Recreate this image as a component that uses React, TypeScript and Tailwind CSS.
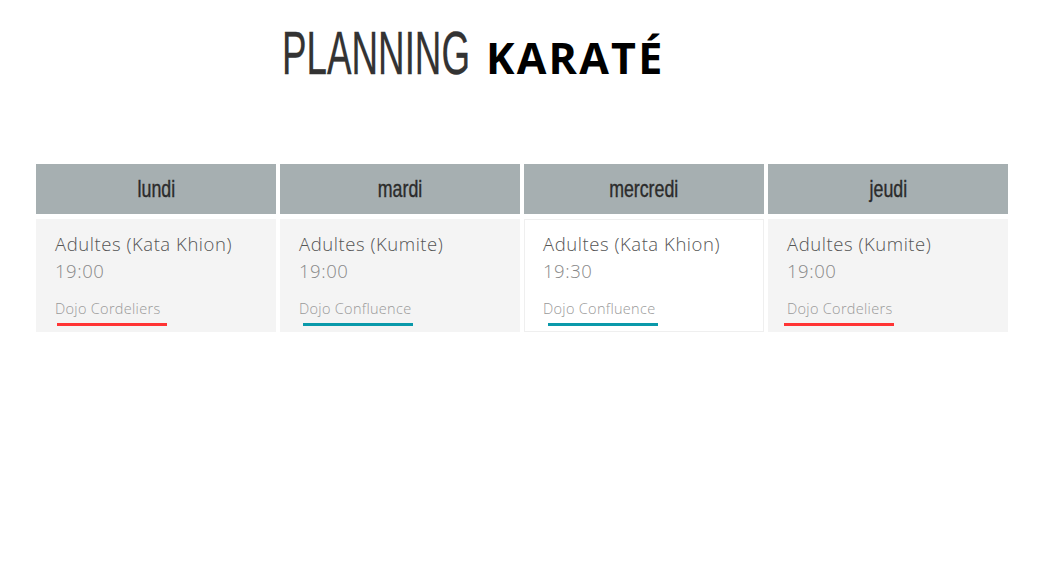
import React from "react";

const days = [
  { day: "lundi", title: "Adultes (Kata Khion)", time: "19:00", place: "Dojo Cordeliers", color: "bg-[#ff3434]", off: "ml-[2px]", white: false },
  { day: "mardi", title: "Adultes (Kumite)", time: "19:00", place: "Dojo Confluence", color: "bg-[#0a99aa]", off: "ml-[4px]", white: false },
  { day: "mercredi", title: "Adultes (Kata Khion)", time: "19:30", place: "Dojo Confluence", color: "bg-[#0a99aa]", off: "ml-[5px]", white: true },
  { day: "jeudi", title: "Adultes (Kumite)", time: "19:00", place: "Dojo Cordeliers", color: "bg-[#ff3434]", off: "ml-[-3px]", white: false },
];

export default function App() {
  return (
    <div className="w-[1058px] h-[570px] bg-white overflow-hidden">
      <div className="pl-[282px] pt-[23px] h-[164px] flex items-start">
        <h1 className="flex items-baseline leading-none">
          <span className="inline-block w-[184px]">
            <span
              className="inline-block origin-left scale-x-[0.603] text-[61px] text-[#333] font-normal whitespace-nowrap [-webkit-text-stroke:0.3px_#333]"
              style={{ fontFamily: '"Liberation Sans", sans-serif' }}
            >
              PLANNING
            </span>
          </span>
          <span
            className="ml-[20px] text-[43px] font-bold text-black tracking-[2.2px]"
            style={{ fontFamily: '"Open Sans", sans-serif' }}
          >
            KARATÉ
          </span>
        </h1>
      </div>
      <div className="ml-[36px] w-[972px] grid grid-cols-4 gap-x-[4px]">
        {days.map((d) => (
          <div key={d.day} className="flex flex-col gap-[5px]">
            <div className="h-[50px] bg-[#a6afb1] flex items-center justify-center">
              <span
                className="inline-block scale-x-[0.74] text-[24px] text-[#2b2b2b] leading-none [-webkit-text-stroke:0.4px_#2b2b2b]"
                style={{ fontFamily: '"Liberation Sans", sans-serif' }}
              >
                {d.day}
              </span>
            </div>
            <div
              className={
                "h-[113px] " +
                (d.white ? "bg-white border border-[#efefef] pl-[18px] pt-[10px]" : "bg-[#f4f4f4] pl-[19px] pt-[11px]")
              }
              style={{ fontFamily: '"Open Sans", sans-serif' }}
            >
              <div className="text-[18.5px] font-light text-[#555] leading-[27px] tracking-[0.55px] whitespace-nowrap">{d.title}</div>
              <div className="text-[18.5px] font-light text-[#888] leading-[27px] tracking-[0.55px]">{d.time}</div>
              <div className="mt-[16px] text-[14.5px] font-light text-[#999] leading-[18px] tracking-[0.3px]">{d.place}</div>
              <div className={"mt-[5px] h-[3px] w-[110px] " + d.color + " " + d.off}></div>
            </div>
          </div>
        ))}
      </div>
    </div>
  );
}
